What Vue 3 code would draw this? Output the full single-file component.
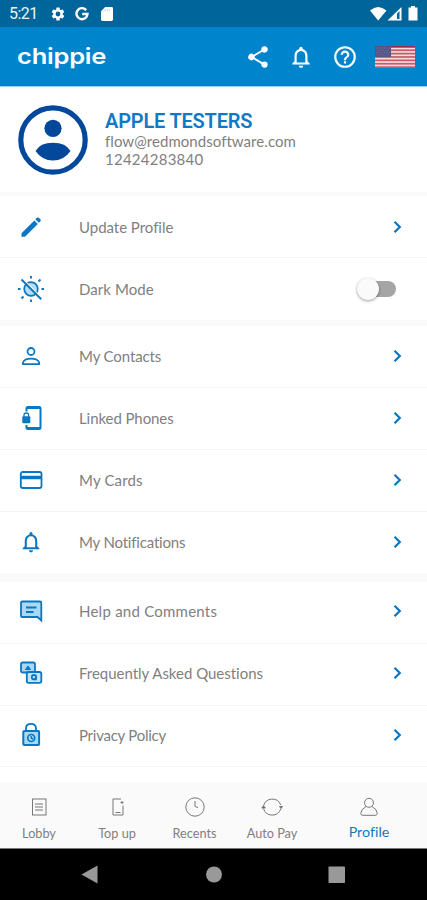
<template>
  <div class="phone">
    <div class="status">
      <span class="time">5:21</span>
      <svg class="gear" viewBox="0 0 24 24"><path fill-rule="evenodd" d="M19.14 12.94a7 7 0 0 0 0-1.88l2.03-1.58a.5.5 0 0 0 .12-.61l-1.92-3.32a.5.5 0 0 0-.59-.22l-2.39.96a7 7 0 0 0-1.62-.94l-.36-2.54A.5.5 0 0 0 13.92 2.4h-3.84a.5.5 0 0 0-.47.41l-.36 2.54a7 7 0 0 0-1.62.94l-2.39-.96a.5.5 0 0 0-.59.22L2.74 8.87a.5.5 0 0 0 .12.61l2.03 1.58a7 7 0 0 0 0 1.88l-2.03 1.58a.5.5 0 0 0-.12.61l1.92 3.32c.12.22.37.29.59.22l2.39-.96a7 7 0 0 0 1.62.94l.36 2.54c.05.24.24.41.48.41h3.84c.24 0 .44-.17.47-.41l.36-2.54a7 7 0 0 0 1.62-.94l2.39.96c.22.08.47 0 .59-.22l1.92-3.32a.5.5 0 0 0-.12-.61zM12 15.6a3.6 3.6 0 1 1 0-7.2 3.6 3.6 0 0 1 0 7.2z" /></svg>
      <svg class="google" viewBox="0 0 14 14"><path d="M11.2 3.1A5.5 5.5 0 1 0 12.5 7H7.2" fill="none" stroke="#fff" stroke-width="2.4" /></svg>
      <svg class="sd" viewBox="0 0 13 15"><path d="M4.5 0H11.5Q13 0 13 1.5V13.5Q13 15 11.5 15H1.5Q0 15 0 13.5V4.5z" /><path d="M4.3 2.5v2M6.7 2.5v2M9.1 2.5v2" stroke="#a9c9dc" stroke-width="1" /></svg>
      <svg class="signals" viewBox="0 0 50 16">
        <path d="M0 4.5Q8 -2.5 16.5 4.5L8.2 14.5z" />
        <path d="M17.5 14.5L31.5 1V14.5z" />
        <path d="M27 7.5V13h2.5V5z" fill="#00659b" />
        <path d="M41 1.5V0h4v1.500h2.500v13h-9v-13z" />
      </svg>
    </div>

    <header class="header">
      <span class="logo">chippie</span>
      <svg class="head-icon share" viewBox="0 0 24 24"><path d="M18 16.080c-.76 0-1.440.3-1.960.77L8.910 12.700a3 3 0 0 0 0-1.400l7.050-4.110A3 3 0 1 0 15 5c0 .24.040.47.090.7L8.040 9.810a3 3 0 1 0 0 4.380l7.120 4.160a2.920 2.920 0 1 0 2.840-2.270z" /></svg>
      <svg class="head-icon bell" viewBox="0 0 24 24"><path :d="bellPath" /></svg>
      <svg class="head-icon help" viewBox="0 0 24 24"><path d="M11 18h2v-2h-2zm1-16a10 10 0 1 0 0 20 10 10 0 0 0 0-20zm0 18a8 8 0 1 1 0-16 8 8 0 0 1 0 16zm0-14a4 4 0 0 0-4 4h2a2 2 0 1 1 4 0c0 2-3 1.750-3 5h2c0-2.250 3-2.500 3-5a4 4 0 0 0-4-4z" /></svg>
      <svg class="flag" viewBox="0 0 40 22">
        <rect width="40" height="22" fill="#f3dcdc" />
        <rect v-for="n in 7" :key="n" :y="(n - 1) * 3.38" width="40" height="1.700" :fill="n === 1 ? '#a0265e' : '#c65b67'" />
        <rect width="16" height="11" fill="#555484" />
        <path d="M1 2h14M2.500 4.300h12M1 6.600h14M2.500 8.900h12" stroke="#8582a6" stroke-width=".8" stroke-dasharray="1 1.600" />
      </svg>
    </header>

    <section class="user">
      <svg class="avatar" viewBox="0 0 70 70">
        <circle cx="35" cy="35" r="32.200" fill="none" stroke="#04489b" stroke-width="5.200" />
        <circle cx="35" cy="23.300" r="8.600" />
        <path d="M17.500 46Q22 37.700 35 37.700T52.500 46Q46 55.500 35 55.500T17.500 46z" />
      </svg>
      <div class="details">
        <div class="name">APPLE TESTERS</div>
        <div class="email">flow@redmondsoftware.com</div>
        <div class="number">12424283840</div>
      </div>
    </section>

    <main class="menu">
      <section v-for="(group, i) in groups" :key="i" class="group">
        <div v-for="item in group" :key="item.label" class="row">
          <svg class="row-icon" viewBox="0 0 28 28">
            <g v-if="item.icon === 'pencil'" stroke="none" fill="#0877c4">
              <path d="M4.500 20.200L17.300 7.400l3.500 3.500L8 23.700H4.500z" /><path d="M18.400 6.300l1.500-1.500q1-.8 2 0l1.500 1.500q.8 1 0 2l-1.500 1.500z" />
            </g>
            <g v-else-if="item.icon === 'sun'">
              <circle cx="14" cy="14" r="6.800" fill="#b5ddf5" stroke-width="1.700" />
              <path d="M14 1v2.500M14 24.500V27M1 14h2.500M24.500 14H27M21.500 6.500l2-2M4.500 23.500L6.500 21.500" stroke-width="1.900" />
              <path d="M5.500 3.800L25 23.300" stroke="#fff" stroke-width="1.500" /><path d="M4.500 4.500L24.200 24.200" stroke-width="2" />
            </g>
            <g v-else-if="item.icon === 'person'" stroke-width="1.800">
              <circle cx="14" cy="9.500" r="3.500" /><path d="M6 22.200V20.500Q7.500 16.700 14 16.700T22.200 20.500V22.200z" />
            </g>
            <g v-else-if="item.icon === 'phone'" stroke-width="2">
              <path d="M9.500 7.500V4.500q0-1.500 1.500-1.500H22q1.500 0 1.500 1.500v19q0 1.500-1.500 1.500H11q-1.500 0-1.500-1.500V21" /><path d="M10 4h13M10 24h13" />
              <path d="M7 13v-2q0-2 2.300-2t2.300 2v2" stroke-width="1.300" /><rect x="5.300" y="12.200" width="8" height="7" rx="1" fill="#0877c4" stroke="none" />
            </g>
            <g v-else-if="item.icon === 'card'">
              <rect x="3.800" y="6" width="20.700" height="16" rx="2" stroke-width="1.800" /><path d="M4 11.500h20.500" stroke-width="3.500" />
            </g>
            <svg v-else-if="item.icon === 'bell'" x="1.500" y="1.500" width="25" height="25" viewBox="0 0 24 24"><path :d="bellPath" fill="#0877c4" stroke="none" /></svg>
            <g v-else-if="item.icon === 'comment'">
              <path d="M4 5.500Q4 4.500 5.300 4.500H23q1.300 0 1.300 1.300V23.500l-3.800-3.500H5.300q-1.300 0-1.300-1.300z" fill="#a9d8f3" stroke-width="1.800" /><path d="M9 10.500h10.500M9 15h7.500" stroke-width="1.800" />
            </g>
            <g v-else-if="item.icon === 'faq'" stroke-width="1.800">
              <rect x="4" y="3.500" width="14" height="10" rx="1.800" fill="#a9d8f3" /><path d="M8.500 10.500L11 7l2.500 3.500z" fill="#0877c4" stroke-width="1" />
              <rect x="9.800" y="13" width="14.500" height="10.800" rx="1.800" fill="#c5e6fa" /><circle cx="17" cy="18.200" r="2.200" /><path d="M17.500 19l2 2" />
            </g>
            <g v-else>
              <path d="M9 10V7.500Q9 2.800 14 2.800t5 4.700V10" stroke-width="1.800" /><rect x="6.300" y="10" width="15.800" height="14" rx="1" fill="#a9d8f3" stroke-width="2" /><circle cx="14.200" cy="17" r="3.500" stroke-width="1.700" /><path d="M14.200 15v2l2 1" stroke-width="1.400" />
            </g>
          </svg>
          <span class="label"><span :style="{ letterSpacing: item.spacing + 'px' }">{{ item.label }}</span></span>
          <button v-if="item.toggle" class="switch" :class="{ on: dark }" @click="dark = !dark"><i></i></button>
          <svg v-else class="chevron" viewBox="0 0 10 14"><path d="M1.500 1.700L6.800 7 1.500 12.300" /></svg>
        </div>
      </section>
    </main>

    <nav class="tabs">
      <div v-for="tab in tabs" :key="tab.label" class="tab" :class="{ active: tab.label === 'Profile' }" :style="{ width: tab.width + 'px' }">
        <svg viewBox="0 0 22 22">
          <g v-if="tab.label === 'Lobby'"><rect x="4.500" y="3" width="13.500" height="16" /><path d="M7 8h8M7 11h8M7 14h8" /></g>
          <g v-else-if="tab.label === 'Top up'"><path d="M17 9.500v9.500H7V3h8M9.500 16.500h5" /><path d="M16 5v3M14.500 6.500h3" /></g>
          <g v-else-if="tab.label === 'Recents'"><circle cx="11" cy="11" r="9.200" /><path d="M11 5v5.500l3 1" /></g>
          <g v-else-if="tab.label === 'Auto Pay'"><path d="M2.500 10A9 9 0 0 1 19.700 9M19.700 13A9 9 0 0 1 2.500 12.500" /><path d="M.8 12l1.700-2 1.900 2zM18.500 10.500h3l-1.500 2z" fill="#555" /></g>
          <g v-else><circle cx="11" cy="6.800" r="4.500" /><path d="M8 10.500Q2.700 13.500 2.700 17.500Q2.700 19.300 5 19.300H17Q19.300 19.300 19.300 17.500Q19.300 13.500 14 10.500" /></g>
        </svg>
        <span>{{ tab.label }}</span>
      </div>
    </nav>

    <div class="system">
      <svg viewBox="0 0 427 51">
        <path d="M81.500 25.500L97.500 16.500V34.500z" /><circle cx="214" cy="25.500" r="8" /><rect x="328.500" y="17.500" width="16.500" height="16.500" rx=".8" />
      </svg>
    </div>
  </div>
</template>

<script setup>
import { ref } from "vue";

const dark = ref(false);

const bellPath = "M12 22a2 2 0 0 0 2-2h-4a2 2 0 0 0 2 2zm6-6v-5c0-3.070-1.630-5.640-4.500-6.320V4a1.500 1.500 0 0 0-3 0v.68C7.640 5.360 6 7.920 6 11v5l-2 2v1h16v-1zm-2 1H8v-6c0-2.480 1.510-4.500 4-4.500s4 2.020 4 4.500z";

const groups = [
  [
    { label: "Update Profile", icon: "pencil", spacing: -0.03 },
    { label: "Dark Mode", icon: "sun", toggle: true, spacing: 0.08 }
  ],
  [
    { label: "My Contacts", icon: "person", spacing: -0.12 },
    { label: "Linked Phones", icon: "phone", spacing: -0.08 },
    { label: "My Cards", icon: "card", spacing: 0.15 },
    { label: "My Notifications", icon: "bell", spacing: -0.18 }
  ],
  [
    { label: "Help and Comments", icon: "comment", spacing: 0.24 },
    { label: "Frequently Asked Questions", icon: "faq", spacing: -0.02 },
    { label: "Privacy Policy", icon: "lock", spacing: -0.25 }
  ]
];

const tabs = [
  { label: "Lobby", width: 78 },
  { label: "Top up", width: 78 },
  { label: "Recents", width: 77 },
  { label: "Auto Pay", width: 78 },
  { label: "Profile", width: 116 }
];
</script>

<style>
body {
  margin: 0;
}
</style>

<style scoped>
.phone {
  width: 427px;
  height: 900px;
  display: flex;
  flex-direction: column;
  overflow: hidden;
  background: #fff;
  font-family: Lato, "Open Sans", sans-serif;
  font-variant-ligatures: none;
  color: #808080;
}

svg {
  display: block;
  flex: none;
}

/* Status bar */
.status {
  height: 27px;
  flex: none;
  display: flex;
  align-items: center;
  box-sizing: border-box;
  padding: 0 7px 0 9px;
  background: #00659b;
}

.status svg {
  fill: #fff;
}

.time {
  width: 41px;
  color: #e8f4fb;
  font: 16px Roboto, sans-serif;
  letter-spacing: -0.5px;
}

.gear {
  width: 16px;
  height: 16px;
}

.google {
  width: 14px;
  height: 14px;
  margin-left: 9px;
}

.sd {
  width: 12px;
  height: 14px;
  margin-left: 12px;
}

.signals {
  width: 50px;
  height: 16px;
  margin-left: auto;
}

/* App header */
.header {
  height: 60px;
  flex: none;
  display: flex;
  align-items: center;
  box-sizing: border-box;
  padding: 0 12px 0 17px;
  background: #0085cd;
  border-bottom: 1px solid #9bcdea;
}

.logo {
  width: 229px;
  margin-top: -2px;
  color: #fff;
  font: 600 22px Inter, sans-serif;
  letter-spacing: -0.2px;
  transform: scaleX(1.16);
  transform-origin: left;
}

.head-icon {
  fill: #fff;
}

.share {
  width: 26px;
  height: 26px;
  margin-left: -1px;
}

.bell {
  width: 26px;
  height: 26px;
  margin-left: 17px;
}

.help {
  width: 26px;
  height: 26px;
  margin-left: 18px;
}

.flag {
  width: 40px;
  height: 22px;
  margin-left: auto;
}

/* User summary */
.user {
  height: 109px;
  flex: none;
  display: flex;
  box-sizing: border-box;
  padding: 18px 0 0 18px;
  border-bottom: 4px solid #fafafa;
}

.avatar {
  width: 70px;
  height: 70px;
  fill: #04489b;
}

.details {
  margin-left: 17px;
  padding-top: 5px;
}

.name {
  color: #1179c4;
  font: 600 20px/22px Roboto, sans-serif;
  letter-spacing: -0.2px;
  white-space: nowrap;
}

.email,
.number {
  font-size: 15px;
  line-height: 18px;
  white-space: nowrap;
}

.email {
  letter-spacing: 0.05px;
}

.number {
  letter-spacing: 0.25px;
}

/* Menu */
.menu {
  height: 586px;
  flex: none;
}

.group {
  border-bottom: 6px solid #f9f9f9;
}

.group:nth-child(2) {
  border-bottom-width: 9px;
}

.group:last-child {
  border-bottom: none;
}

.row {
  height: 62px;
  display: flex;
  align-items: center;
  box-sizing: border-box;
  padding: 0 24px 0 17px;
  border-bottom: 1px solid #f4f4f4;
}

.group:nth-child(2) .row {
  padding-bottom: 2px;
}

.group:nth-child(2) .row:last-child {
  height: 61px;
  padding-bottom: 0;
}

.group:last-child .row {
  padding-bottom: 4px;
}

.group:last-child .row:last-child {
  height: 61px;
  padding-bottom: 3px;
}

.group:not(:last-child) .row:last-child {
  border-bottom-color: transparent;
}

.row-icon {
  width: 28px;
  height: 28px;
  fill: none;
  stroke: #0877c4;
}

.label {
  margin-left: 34px;
  flex: 1;
  font-size: 15px;
  line-height: 20px;
  white-space: nowrap;
}

.chevron {
  width: 10px;
  height: 14px;
  fill: none;
  stroke: #0877c4;
  stroke-width: 2.2;
}

.switch {
  width: 37px;
  height: 16px;
  margin-right: 7px;
  padding: 0;
  display: flex;
  align-items: center;
  border: none;
  border-radius: 8px;
  background: #a5a5a5;
}

.switch i {
  width: 22px;
  height: 22px;
  flex: none;
  margin-left: -2px;
  border-radius: 50%;
  background: #fafafa;
  box-shadow: 0 1px 3px rgba(0, 0, 0, 0.4);
}

.switch.on i {
  margin-left: 18px;
}

/* Bottom tabs */
.tabs {
  height: 67px;
  flex: none;
  display: flex;
  box-sizing: border-box;
  background: #fafafa;
  border-bottom: 1px solid #777;
}

.tab {
  padding-top: 14px;
  display: flex;
  flex-direction: column;
  align-items: center;
  font-size: 12.7px;
  line-height: 16px;
}

.tab svg {
  width: 22px;
  height: 22px;
  margin-bottom: 7px;
  fill: none;
  stroke: #777;
  stroke-width: 1;
}

.tab.active {
  color: #1179c4;
  font-size: 14.3px;
}

.tab.active svg {
  margin-bottom: 6px;
}

/* System navigation */
.system {
  height: 51px;
  flex: none;
  background: #000;
}

.system svg {
  width: 427px;
  height: 51px;
  fill: #999;
}
</style>
